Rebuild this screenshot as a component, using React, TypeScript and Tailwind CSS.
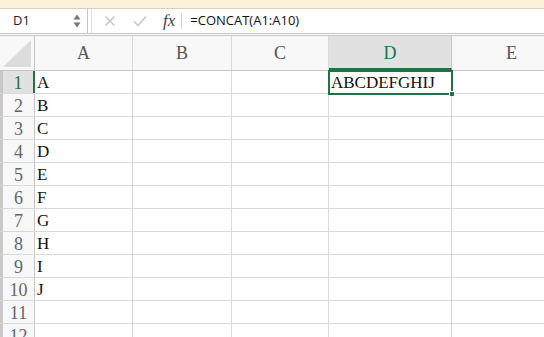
import React from "react";

const columns = [
  { name: "A", width: 98 },
  { name: "B", width: 99 },
  { name: "C", width: 97 },
  { name: "D", width: 123 },
  { name: "E", width: 120 },
];

const rows = Array.from({ length: 12 }, (_, i) => i + 1);
const colA = ["A", "B", "C", "D", "E", "F", "G", "H", "I", "J"];

const serif = { fontFamily: '"Liberation Serif", "Times New Roman", serif' };

const FormulaBar = () => (
  <div className="flex h-[25px] items-stretch bg-white border-b border-[#c6c6c6]">
    <div className="flex w-[88px] items-center justify-between border-r border-[#c6c6c6] pl-[13px] pr-[6px]">
      <span className="text-[13px] text-[#222]">D1</span>
      <div className="flex flex-col items-center gap-[2px]">
        <svg width="8" height="6" viewBox="0 0 8 6">
          <path d="M4 0.5 L7.5 5.5 L0.5 5.5 Z" fill="#777" />
        </svg>
        <svg width="8" height="6" viewBox="0 0 8 6">
          <path d="M0.5 0.5 L7.5 0.5 L4 5.5 Z" fill="#777" />
        </svg>
      </div>
    </div>
    <div className="w-[4px] border-r border-[#e2e2e2]" />
    <div className="flex items-center">
      <svg className="ml-[12px]" width="12" height="12" viewBox="0 0 12 12">
        <path d="M1.5 1.5 L10.5 10.5 M10.5 1.5 L1.5 10.5" stroke="#c8c8c8" strokeWidth="1.6" />
      </svg>
      <svg className="ml-[17px]" width="14" height="12" viewBox="0 0 14 12">
        <path d="M1 6.5 L5 10.5 L13 1.5" stroke="#c8c8c8" strokeWidth="1.6" fill="none" />
      </svg>
      <span className="ml-[16px] text-[17px] italic text-[#444]" style={serif}>
        fx
      </span>
      <div className="ml-[6px] h-[16px] w-px bg-[#d0d0d0]" />
    </div>
    <div className="flex items-center pl-[8px] text-[13px] text-[#111]">
      =CONCAT(A1:A10)
    </div>
  </div>
);

export default function App() {
  return (
    <div
      className="h-[337px] w-[544px] overflow-hidden bg-white"
      style={{ fontFamily: '"Open Sans", "Liberation Sans", sans-serif' }}
    >
      <div className="h-[9px] bg-[#fcf2da] border-b border-[#d6d0c4]" />
      <FormulaBar />
      <div className="h-[2px] border-b border-[#c6c6c6] bg-white" />

      <div className="relative">
        {/* column header */}
        <div className="flex h-[35px] bg-[#f8f8f8] border-b border-[#c6c6c6]">
          <div className="relative w-[35px] shrink-0 border-r border-[#c6c6c6]">
            <svg className="absolute bottom-[3px] right-[3px]" width="28" height="27" viewBox="0 0 28 27">
              <path d="M28 0 L28 27 L0 27 Z" fill="#dcdcdc" />
            </svg>
          </div>
          {columns.map((c) => (
            <div
              key={c.name}
              className={
                c.name === "D"
                  ? "flex shrink-0 items-center justify-center border-r border-[#c6c6c6] border-b-2 border-b-[#217346] bg-[#e1e1e1] pt-[2px] text-[18px] text-[#217346]"
                  : "flex shrink-0 items-center justify-center border-r border-[#dadada] text-[18px] text-[#555]"
              }
              style={{ ...serif, width: c.width }}
            >
              {c.name}
            </div>
          ))}
        </div>

        {/* rows */}
        {rows.map((r) => (
          <div key={r} className="flex h-[23px] border-b border-[#d9d9d9]">
            <div
              className={
                r === 1
                  ? "flex w-[35px] shrink-0 items-end justify-center border-r-2 border-r-[#217346] border-l-[3px] border-l-[#c8c8c8] bg-[#e1e1e1] text-[18px] leading-[20px] text-[#217346]"
                  : "flex w-[35px] shrink-0 items-end justify-center border-r border-[#c6c6c6] border-l-[3px] border-l-[#c8c8c8] bg-[#f8f8f8] text-[18px] leading-[20px] text-[#666]"
              }
              style={serif}
            >
              {r}
            </div>
            {columns.map((c) => (
              <div
                key={c.name}
                className="flex shrink-0 items-end border-r border-[#d9d9d9] pl-[2px] text-[17px] leading-[20px] text-[#111]"
                style={{ ...serif, width: c.width }}
              >
                {c.name === "A" && r <= 10 ? colA[r - 1] : ""}
                {c.name === "D" && r === 1 ? "ABCDEFGHIJ" : ""}
              </div>
            ))}
          </div>
        ))}

        {/* selection of D1 */}
        <div className="pointer-events-none absolute left-[328px] top-[34px] h-[25px] w-[125px] border-2 border-[#217346]">
          <div className="absolute -bottom-[4px] -right-[4px] h-[6px] w-[6px] border border-white bg-[#217346]" />
        </div>
      </div>
    </div>
  );
}
